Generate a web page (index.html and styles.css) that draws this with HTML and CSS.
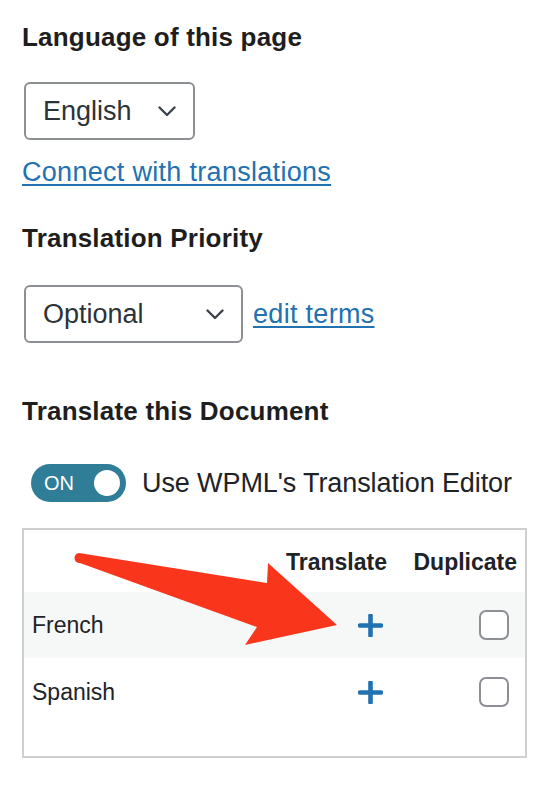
FILE: index.html
```html
<!DOCTYPE html>
<html lang="en">
<head>
  <meta charset="UTF-8" />
  <meta name="viewport" content="width=device-width, initial-scale=1.0" />
  <title>WPML Language</title>
  <link rel="stylesheet" href="styles.css">
</head>
<body>
  <div class="panel">
    <h3 class="label">Language of this page</h3>
    <div class="select select-lang">
      <span>English</span>
      <svg class="chevron" width="18" height="11" viewBox="0 0 18 11"><polyline points="1.5,1.5 9,9 16.5,1.5" /></svg>
    </div>
    <a class="link connect" href="#">Connect with translations</a>

    <h3 class="label label-priority">Translation Priority</h3>
    <div class="priority-row">
      <div class="select select-priority">
        <span>Optional</span>
        <svg class="chevron" width="18" height="11" viewBox="0 0 18 11"><polyline points="1.5,1.5 9,9 16.5,1.5" /></svg>
      </div>
      <a class="link" href="#">edit terms</a>
    </div>

    <h3 class="label label-translate">Translate this Document</h3>
    <div class="editor-row">
      <span class="toggle"><span class="toggle-text">ON</span><span class="toggle-knob"></span></span>
      <span>Use WPML's Translation Editor</span>
    </div>

    <div class="lang-table">
      <div class="row head">
        <span></span>
        <span class="col-translate">Translate</span>
        <span class="col-duplicate">Duplicate</span>
      </div>
      <div class="row alt">
        <span class="lang-name">French</span>
        <svg class="plus" width="25" height="23" viewBox="0 0 25 23"><line x1="2" y1="11.5" x2="23" y2="11.5" /><line x1="12.5" y1="1.5" x2="12.5" y2="21.5" /></svg>
        <span class="checkbox"></span>
      </div>
      <div class="row">
        <span class="lang-name">Spanish</span>
        <svg class="plus" width="25" height="23" viewBox="0 0 25 23"><line x1="2" y1="11.5" x2="23" y2="11.5" /><line x1="12.5" y1="1.5" x2="12.5" y2="21.5" /></svg>
        <span class="checkbox"></span>
      </div>

      <!-- annotation arrow drawn over the table -->
      <svg class="arrow" width="505" height="230" viewBox="0 0 505 230">
        <path d="M57,25 L245,55 L246,35 L315,97 L223,117 L235,99 L58,35 A5,5 0 0 1 57,25 Z" />
      </svg>
    </div>
  </div>
</body>
</html>
```

FILE: styles.css
```css
body {
  margin: 0;
  background-color: #fff;
  font-family: "Liberation Sans", Arial, sans-serif;
  color: #1d2327;
}
.panel {
  padding: 22px 19px 0 22px;
}
.label {
  margin: 0;
  font-size: 26px;
  line-height: 30px;
  font-weight: bold;
  letter-spacing: 0.2px;
  color: #1e1e1e;
}
.label-priority {
  margin-top: 35px;
}
.label-translate {
  margin-top: 53px;
}
.select {
  display: flex;
  align-items: center;
  justify-content: space-between;
  box-sizing: border-box;
  height: 58px;
  margin-left: 2px;
  padding: 0 17px 0 17px;
  border: 2px solid #8c8f94;
  border-radius: 6px;
  font-size: 27px;
  line-height: 32px;
  color: #2c3338;
}
.select-lang {
  width: 171px;
  margin-top: 30px;
}
.select-priority {
  width: 219px;
  margin-left: 0;
}
.chevron polyline {
  fill: none;
  stroke: #3c434a;
  stroke-width: 2.4;
  stroke-linecap: round;
  stroke-linejoin: round;
}
.link {
  color: #2271b1;
  font-size: 27px;
  line-height: 32px;
  letter-spacing: 0.3px;
  text-decoration: underline;
  text-underline-offset: 3px;
  text-decoration-thickness: 2px;
}
.connect {
  display: block;
  margin-top: 16px;
}
.priority-row {
  display: flex;
  align-items: center;
  gap: 10px;
  margin-top: 32px;
  margin-left: 2px;
}
.editor-row {
  display: flex;
  align-items: center;
  gap: 16px;
  margin-top: 38px;
  margin-left: 9px;
  font-size: 27px;
  line-height: 32px;
  letter-spacing: -0.1px;
}
.toggle {
  display: inline-flex;
  align-items: center;
  justify-content: space-between;
  box-sizing: border-box;
  width: 95px;
  height: 38px;
  padding: 0 6px 0 13px;
  border-radius: 19px;
  background-color: #2f7d96;
}
.toggle-text {
  color: #fff;
  font-size: 20px;
  line-height: 24px;
}
.toggle-knob {
  width: 26px;
  height: 26px;
  border-radius: 50%;
  background-color: #fff;
}
.lang-table {
  position: relative;
  width: 505px;
  box-sizing: border-box;
  margin-top: 26px;
  padding-bottom: 30px;
  border: 2px solid #cfcfcf;
  font-size: 23px;
}
.row {
  display: grid;
  grid-template-columns: 1fr 120px 130px;
  align-items: center;
  height: 66px;
}
.row + .row + .row {
  height: 68px;
}
.head {
  height: 62px;
  align-items: start;
  padding-top: 19px;
  box-sizing: border-box;
  font-size: 23px;
  line-height: 26px;
  font-weight: bold;
}
.alt {
  background-color: #f6f7f7;
}
.col-translate {
  text-align: right;
  padding-right: 8px;
}
.col-duplicate {
  text-align: right;
  padding-right: 8px;
}
.lang-name {
  padding-left: 8px;
}
.plus {
  justify-self: end;
  margin-right: 12px;
}
.plus line {
  stroke: #2271b1;
  stroke-width: 4.6;
  stroke-linecap: round;
}
.checkbox {
  justify-self: end;
  width: 30px;
  height: 30px;
  margin-right: 16px;
  box-sizing: border-box;
  border: 2px solid #8c8f94;
  border-radius: 7px;
  background-color: #fff;
}
.arrow {
  position: absolute;
  top: -2px;
  left: -2px;
  pointer-events: none;
}
.arrow path {
  fill: #f9361b;
}
```
